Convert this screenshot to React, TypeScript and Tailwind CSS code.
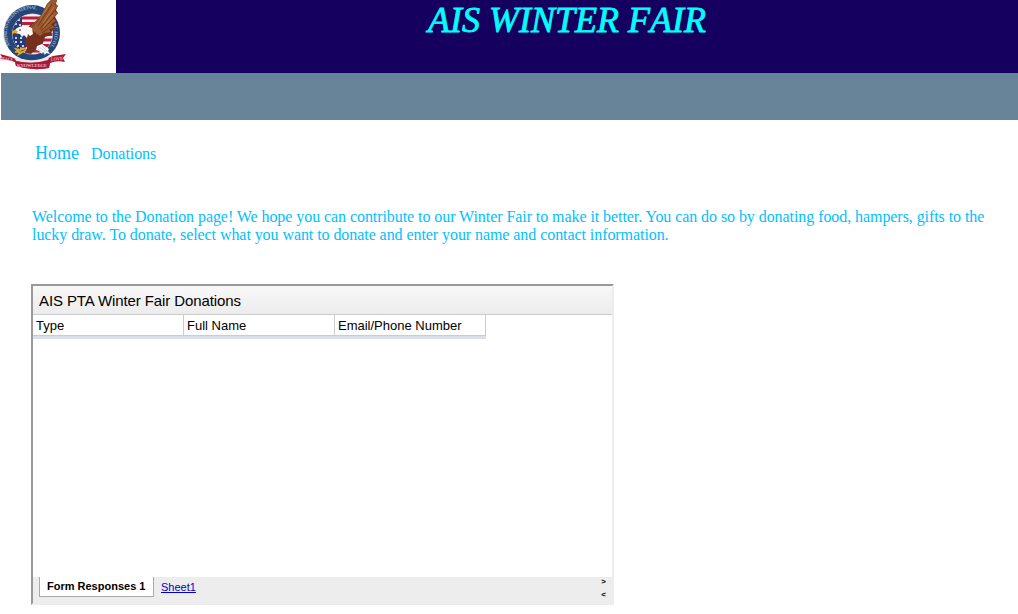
function SchoolLogo() {
  return (
    <svg width="70" height="73" viewBox="0 0 70 73" className="block" role="img" aria-label="American International School">
      <defs>
        <clipPath id="shield"><circle cx="32.5" cy="34" r="20" /></clipPath>
        <path id="ringTop" d="M10.5 46A24.3 24.3 0 0 1 42 11.5" />
        <path id="ringSide" d="M53 24A23.6 23.6 0 0 1 49 48" />
      </defs>
      <circle cx="32" cy="33" r="28" fill="#234578" />
      <circle cx="32.5" cy="34" r="20.5" fill="#c5cbda" />
      <g clipPath="url(#shield)">
        <rect x="12" y="13" width="42" height="42" fill="#f5eef1" />
        <path d="M12 18H54M12 23.5H54M12 29H54M12 34.5H54M12 40H54M12 45.5H54M12 51H54" stroke="#b91f3d" strokeWidth="2.8" />
        <rect x="11" y="14" width="11" height="37" fill="#263b75" />
        <rect x="11" y="36" width="15" height="15" fill="#263b75" />
        <path d="M18 20h2M15 24h2M19 25h2M15 38h2M20 38h2M15 42h2M20 42h2M17 46h2M22 46h2" stroke="#fff" strokeWidth="1.6" />
      </g>
      <g fill="#91a7c4" fontFamily="Liberation Serif, serif" fontWeight="bold" fontSize="5.2">
        <text><textPath href="#ringTop" textLength="57">AMERICAN INTERNATIONAL</textPath></text>
        <text><textPath href="#ringSide" textLength="24">SCHOOL</textPath></text>
      </g>
      <path d="M27 30L29 26L36 21L42 14L47 4L51 0H57L56 4L58 6L56 10L58 13L55 17L57 21L54 25L56 28L52 31L51 35L45 37L43 43L41 48L35 50L31 54L25 53L27 48L25 43L26 37Z" fill="#74301d" />
      <path d="M29 28L36 21L42 14L47 4L51 0H57L55 5L58 6L54 11L58 13L53 18L56 21L51 24L55 28L49 29L51 32L44 33L40 36Z" fill="#9b592f" />
      <path d="M38 26L52 4M40 29L54 11M41 31L54 18M42 33L53 25M31 28L45 13" fill="none" stroke="#68301c" strokeWidth=".8" />
      <path d="M40 19L50 4M43 23L54 7M43 28L53 15" fill="none" stroke="#ca8c50" strokeWidth=".7" />
      <path d="M14 31L17 28Q24 24 32 28L33 34L30 36L28 34L27 38L24 35L22 37L20 34L14 33Z" fill="#fffaf5" />
      <path d="M12 32L14 30L18 31L17 33L14 33L12 35Z" fill="#e6a332" />
      <path d="M19 30h2" stroke="#342a2a" strokeWidth="1" />
      <path d="M26 48L20 50L16 49L18 51L15 52L20 52L19 54L26 50M26 49L20 48" fill="none" stroke="#e6a82f" strokeWidth="1.7" />
      <path d="M37 46L42 44L49 49L48 51L50 54L46 53L45 55L43 52L42 54L39 51L36 50Z" fill="#fff" />
      <path d="M39 47L46 52M38 49L43 53M42 46L48 52" stroke="#a6b4c6" strokeWidth=".6" />
      <path d="M0 54L11 57Q31 66 53 56L66 54L63 58L65 62Q57 60 50 63L49 68Q32 71 16 66L15 62Q7 59 0 59L2 57Z" fill="#ac1735" />
      <path d="M14 57Q31 64 50 56L48 60Q32 65 16 61Z" fill="#e8e4e7" />
      <path d="M15 61Q32 65 50 61L49 68Q32 71 16 66Z" fill="#ac1735" />
      <g fill="#e8b7c1" fontFamily="Liberation Serif, serif" fontWeight="bold" fontSize="5">
        <text x="17" y="67" textLength="30" lengthAdjust="spacingAndGlyphs">KNOWLEDGE</text>
        <text x="0" y="60" textLength="13" lengthAdjust="spacingAndGlyphs" transform="rotate(6 0 60)">PEACE</text>
        <text x="51" y="61" textLength="12" lengthAdjust="spacingAndGlyphs" transform="rotate(-5 51 61)">LOVE</text>
      </g>
    </svg>
  );
}

export default function App() {
  return (
    <div className="h-[614px] w-[1018px] overflow-hidden bg-white font-['Liberation_Serif',serif] text-[#00bfff]">
      <header className="flex h-[73px]">
        <div className="w-[116px] shrink-0"><SchoolLogo /></div>
        <div className="flex-1 bg-[#15005f] pl-[312px]">
          <h1 className="whitespace-nowrap text-[36px] leading-[40px] text-[#00ffff] italic [font-kerning:none] [-webkit-text-stroke:0.8px_#00ffff]">AIS WINTER FAIR</h1>
        </div>
      </header>
      <div className="ml-px h-[47px] bg-[#688499]" />
      <nav className="flex h-[68px] items-baseline gap-3 pt-[21px] pl-[35px] text-base leading-6">
        <a className="text-[18px]">Home</a>
        <a className="tracking-[-0.07px]">Donations</a>
      </nav>
      <p className="h-[96px] pt-5 pl-8 text-base leading-[18px] tracking-[-0.067px] whitespace-nowrap">
        <span className="block">Welcome to the Donation page! We hope you can contribute to our Winter Fair to make it better. You can do so by donating food, hampers, gifts to the</span>
        <span className="block">lucky draw. To donate, select what you want to donate and enter your name and contact information.</span>
      </p>
      <section className="ml-[31px] flex h-[321px] w-[583px] flex-col border-2 border-t-[#999] border-r-[#ededed] border-b-[#ededed] border-l-[#999] font-['Liberation_Sans',sans-serif] text-black">
        <h2 className="h-[29px] shrink-0 border-b border-[#ccc] bg-linear-to-b from-[#f8f8f8] to-[#ececec] pl-1.5 text-[15px] leading-[30px] tracking-[-0.1px]">AIS PTA Winter Fair Donations</h2>
        <div className="flex h-6 w-[453px] shrink-0 border-b-3 border-[#dadfe8] text-[13px] leading-[21px]">
          <div className="w-[151px] border-r border-b border-[#ccc] pl-[3px]">Type</div>
          <div className="w-[151px] border-r border-b border-[#ccc] pl-[3px]">Full Name</div>
          <div className="w-[151px] border-r border-b border-[#ccc] pl-[3px]">Email/Phone Number</div>
        </div>
        <div className="flex-1" />
        <footer className="flex h-[26px] shrink-0 bg-[#ededed] pl-1.5 text-[11px]">
          <div className="h-5 w-[115px] border-x border-b border-[#aaa] bg-white pl-[7px] font-bold leading-[19px]">Form Responses 1</div>
          <a className="ml-[7px] leading-[21px] text-[#0000cc] underline">Sheet1</a>
          <div className="mr-[6px] ml-auto text-[8px] leading-[9px] font-bold"><div className="h-[13px]">&gt;</div><div>&lt;</div></div>
        </footer>
      </section>
    </div>
  );
}
